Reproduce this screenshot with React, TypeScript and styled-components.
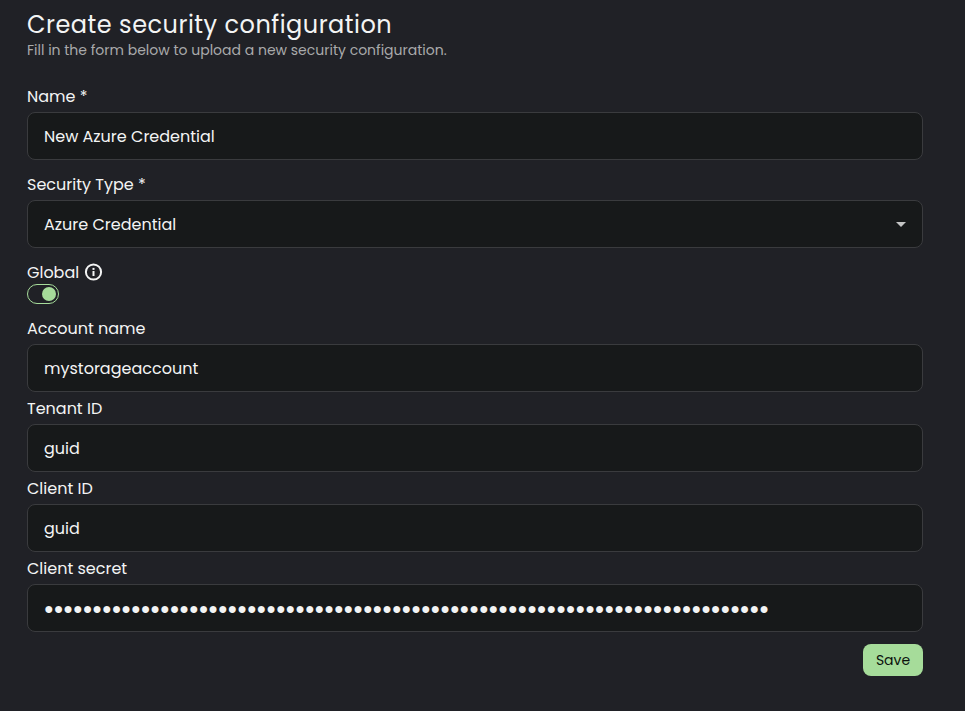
import React from "react";
import styled, { createGlobalStyle } from "styled-components";

const GlobalStyle = createGlobalStyle`
  * { box-sizing: border-box; }
  body {
    margin: 0;
    background: #202126;
    color: #f3f4f4;
    font-family: Poppins, Inter, "Open Sans", sans-serif;
    font-size: 16px;
    line-height: 24px;
  }
`;

const Page = styled.main`
  min-height: 711px;
  padding: 10px 42px 0 27px;
  background: #202126;
`;

const Header = styled.header`
  margin-bottom: 24px;
`;

const Title = styled.h1`
  margin: 0;
  font-size: 24px;
  font-weight: 400;
  line-height: 30px;
  letter-spacing: 0.5px;
  white-space: nowrap;
`;

const Subtitle = styled.p`
  margin: 0;
  color: #a9aaab;
  font-size: 14px;
  line-height: 20px;
  white-space: nowrap;
`;

const Form = styled.form`
  display: flex;
  flex-direction: column;
  gap: 12px;
`;

const FieldGroup = styled.div`
  display: flex;
  flex-direction: column;
  gap: 4px;
`;

const Field = styled.div`
  display: flex;
  flex-direction: column;
  gap: 4px;
`;

const Label = styled.label`
  display: block;
  height: 24px;
  padding-top: 1px;
  line-height: 24px;
  white-space: nowrap;
`;

const Control = styled.div`
  display: flex;
  align-items: center;
  justify-content: space-between;
  height: 48px;
  padding: 1px 16px 0;
  border: 1px solid #3a3b3e;
  border-radius: 8px;
  background: #17191a;
  line-height: 25px;
  white-space: nowrap;
`;

const Secret = styled.span`
  padding-bottom: 1px;
  font-family: "Noto Sans", sans-serif;
`;

const Caret = styled.svg`
  width: 10px;
  height: 5px;
  fill: #c4c5c5;
`;

const ToggleField = styled.div`
  display: flex;
  flex-direction: column;
  align-items: flex-start;
`;

const ToggleLabel = styled.div`
  display: flex;
  align-items: center;
  gap: 5px;
`;

const InfoIcon = styled.svg`
  width: 19px;
  height: 18px;
`;

const Switch = styled.div`
  display: flex;
  align-items: center;
  justify-content: flex-end;
  width: 32px;
  height: 20px;
  padding: 0 2px;
  border: 1px solid #a6dc9a;
  border-radius: 10px;
`;

const Knob = styled.span`
  width: 14px;
  height: 14px;
  border-radius: 50%;
  background: #a6dc9a;
`;

const SaveButton = styled.button`
  align-self: flex-end;
  width: 60px;
  height: 32px;
  padding: 0;
  border: 0;
  border-radius: 8px;
  background: #a6dc9a;
  color: #0c120d;
  font: inherit;
  font-size: 14px;
`;

const credentials = [
  { label: "Account name", value: "mystorageaccount" },
  { label: "Tenant ID", value: "guid" },
  { label: "Client ID", value: "guid" },
];

export default function App() {
  return (
    <>
      <GlobalStyle />
      <Page>
        <Header>
          <Title>Create security configuration</Title>
          <Subtitle>Fill in the form below to upload a new security configuration.</Subtitle>
        </Header>
        <Form>
          <Field>
            <Label>Name *</Label>
            <Control>New Azure Credential</Control>
          </Field>
          <Field>
            <Label>Security Type *</Label>
            <Control>
              Azure Credential
              <Caret viewBox="0 0 10 5">
                <path d="M0 0h10L5 5z" />
              </Caret>
            </Control>
          </Field>
          <ToggleField>
            <ToggleLabel>
              <Label>Global</Label>
              <InfoIcon viewBox="0 0 19 18" fill="none" stroke="#f3f4f4">
                <circle cx="9.5" cy="9" r="7.6" strokeWidth="2" />
                <path d="M9.5 8v5" strokeWidth="2" />
                <path d="M9.5 4.9v2" strokeWidth="2" />
              </InfoIcon>
            </ToggleLabel>
            <Switch role="switch" aria-checked="true">
              <Knob />
            </Switch>
          </ToggleField>
          <FieldGroup>
            {credentials.map((c) => (
              <Field key={c.label}>
                <Label>{c.label}</Label>
                <Control>{c.value}</Control>
              </Field>
            ))}
            <Field>
              <Label>Client secret</Label>
              <Control>
                <Secret>{"●".repeat(75)}</Secret>
              </Control>
            </Field>
          </FieldGroup>
          <SaveButton type="button">Save</SaveButton>
        </Form>
      </Page>
    </>
  );
}
